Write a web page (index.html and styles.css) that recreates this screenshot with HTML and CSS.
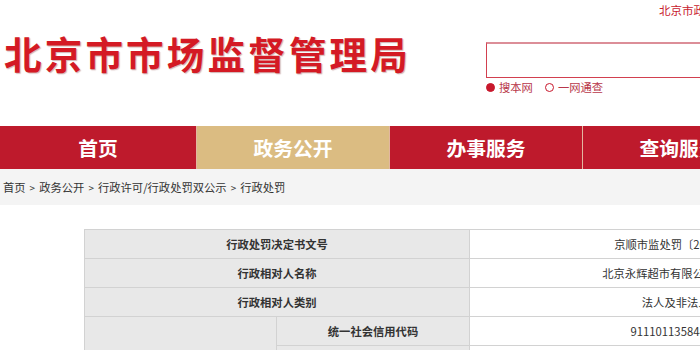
FILE: index.html
```html
<!DOCTYPE html>
<html lang="zh-CN">
<head>
<meta charset="utf-8">
<title>北京市市场监督管理局 - 行政处罚</title>
<link rel="stylesheet" href="styles.css">
</head>
<body>
<div class="page">
  <div class="topbar"><a class="toplink" href="#">北京市政务服务网</a></div>
  <header class="masthead">
    <h1 class="logo">北京市市场监督管理局</h1>
    <div class="search">
      <div class="search-box"></div>
      <div class="radios">
        <span class="radio"><i class="dot on"></i>搜本网</span>
        <span class="radio"><i class="dot"></i>一网通查</span>
      </div>
    </div>
  </header>
  <nav class="nav">
    <a class="nav-item first" href="#">首页</a>
    <a class="nav-item active" href="#">政务公开</a>
    <a class="nav-item" href="#">办事服务</a>
    <a class="nav-item" href="#">查询服务</a>
    <a class="nav-item" href="#">互动交流</a>
  </nav>
  <div class="crumbs">首页<span class="sep">&gt;</span>政务公开<span class="sep">&gt;</span>行政许可/行政处罚双公示<span class="sep">&gt;</span>行政处罚</div>
  <table class="detail">
    <colgroup><col class="c1"><col class="c2"><col class="c3"></colgroup>
    <tr><th colspan="2">行政处罚决定书文号</th><td>京顺市监处罚〔2020〕100号</td></tr>
    <tr><th colspan="2">行政相对人名称</th><td>北京永辉超市有限公司顺义分公司</td></tr>
    <tr><th colspan="2">行政相对人类别</th><td>法人及非法人组织</td></tr>
    <tr><th rowspan="6">行政相对人代码</th><th>统一社会信用代码</th><td>91110113584439721X</td></tr>
    <tr><th>组织机构代码</th><td></td></tr>
    <tr><th>工商注册号</th><td></td></tr>
    <tr><th>税务登记号</th><td></td></tr>
    <tr><th>事业单位证书号</th><td></td></tr>
    <tr><th>社会组织登记证号</th><td></td></tr>
  </table>
</div>
</body>
</html>
```
FILE: styles.css
```css
html, body { margin: 0; padding: 0; overflow: hidden; background: #fff; }
body { font-family: "Noto Sans CJK SC", "Noto Sans", sans-serif; color: #333; }
.page { width: 1000px; }

.topbar { height: 20px; padding-left: 659px; font-size: 11.5px; line-height: 20px; }
.toplink { color: #c8202e; text-decoration: none; }

.masthead { display: flex; height: 106px; }
.logo {
  margin: 0; padding: 14px 0 0 4px; width: 482px;
  font-size: 37.5px; line-height: 37px; font-weight: 700; letter-spacing: 3.2px;
  color: #d41a24; text-shadow: 1px 1px 1px rgba(120, 40, 40, 0.35);
  white-space: nowrap;
}
.search { padding-top: 22px; }
.search-box {
  width: 300px; height: 33px;
  border: 1px solid #d2404f; border-top: 2px solid #dc8e98;
}
.radios { display: flex; gap: 12px; margin-top: 1px; font-size: 11.3px; line-height: 16px; color: #b8374a; }
.radio { display: flex; align-items: center; gap: 4px; }
.dot { display: block; width: 7px; height: 7px; border-radius: 50%; border: 1.2px solid #c8182c; background: #fff; }
.dot.on { background: #c8182c; }

.nav { display: flex; height: 43px; background: #be1a2c; }
.nav-item {
  width: 192px; flex: none; border-left: 1px solid #e3b6a0;
  color: #fff; text-decoration: none; text-align: center;
  font-size: 19.8px; font-weight: 700; line-height: 43px;
  background: #be1a2c;
}
.nav-item.first { width: 196px; border-left: 0; }
.nav-item.active { background: #dbbc82; }

.crumbs { height: 36px; line-height: 36px; padding-left: 3px; background: #f4f4f4; font-size: 11.3px; color: #333; }
.sep { padding: 0 4px; font-size: 10px; }

.detail {
  margin: 24px 0 0 84px; width: 820px;
  border-collapse: collapse; table-layout: fixed;
  font-size: 11.3px;
}
.c1 { width: 192px; }
.c2 { width: 193px; }
.c3 { width: 435px; }
.detail th, .detail td { border: 1px solid #d2d2d2; height: 28px; padding: 0; text-align: center; }
.detail th { background: #e8e8e8; font-weight: 700; color: #333; }
.detail td { background: #fff; color: #333; font-weight: 400; }
```
